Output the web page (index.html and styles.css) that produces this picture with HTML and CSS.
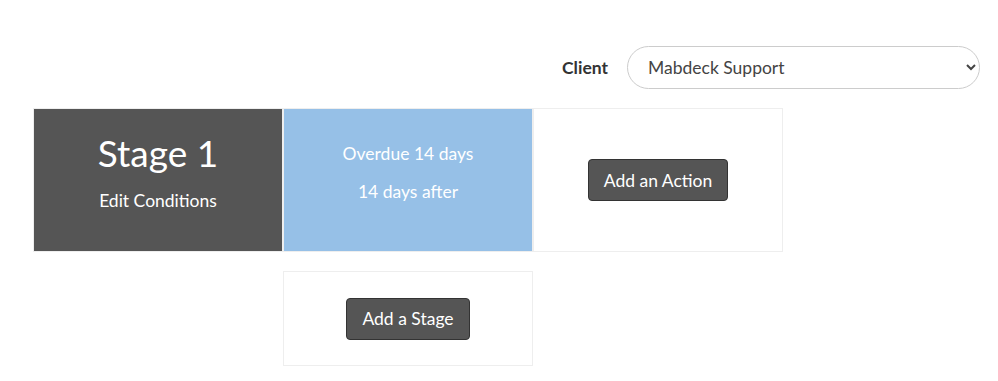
FILE: index.html
```html
<!DOCTYPE HTML>
<html lang=en>
	<head>
		<meta charset=utf-8>
		<title>Stages</title>
		<link rel="stylesheet" href="styles.css">
	</head>
	<body>
		<div class=container>
			<div class=clientRow>
				<label for=clientChooser>Client</label>
				<select id=clientChooser class=clientSelect>
					<option selected>Mabdeck Support</option>
				</select>
			</div>
			<div class=stageGrid>
				<div class="cell stageCell">
					<h2>Stage 1</h2>
					<a href=#>Edit Conditions</a>
				</div>
				<div class="cell conditionCell">
					<p>Overdue 14 days</p>
					<p>14 days after</p>
				</div>
				<div class="cell actionCell">
					<button class=darkButton type=button>Add an Action</button>
				</div>
				<div class="cell addStageCell">
					<button class=darkButton type=button>Add a Stage</button>
				</div>
			</div>
		</div>
	</body>
</html>
```

FILE: styles.css
```css
html, body {
	margin: 0;
	padding: 0;
	background: #fff;
	font-family: Lato, "Open Sans", sans-serif;
	color: #333;
}

.container {
	padding: 46px 18px 0 33px;
}

.clientRow {
	display: flex;
	justify-content: flex-end;
	align-items: center;
	gap: 19px;
}

.clientRow label {
	font-weight: bold;
	font-size: 17.5px;
	color: #333;
}

.clientSelect {
	width: 353px;
	height: 43px;
	padding: 0 16px 0 16px;
	border: 1px solid #ccc;
	border-radius: 22px;
	background: #fff;
	font-family: Lato, sans-serif;
	font-size: 17.5px;
	color: #444;
}

.stageGrid {
	display: grid;
	grid-template-columns: repeat(3, 250px);
	grid-template-rows: 144px 95px;
	row-gap: 19px;
	margin-top: 19px;
}

.cell {
	box-sizing: border-box;
	border: 1px solid #eee;
	display: flex;
	flex-direction: column;
	align-items: center;
	justify-content: center;
	text-align: center;
}

.stageCell {
	background: #555;
	color: #fff;
	padding-bottom: 18px;
}

.stageCell h2 {
	margin: 0 0 15px;
	font-size: 37px;
	font-weight: normal;
	line-height: 1.2;
}

.stageCell a {
	display: block;
	color: #fff;
	text-decoration: none;
	font-size: 17.5px;
	line-height: 21px;
}

.conditionCell {
	background: #96c0e7;
	color: #fff;
	font-size: 17.5px;
}

.conditionCell p {
	margin: 0 0 14px;
	line-height: 24px;
}

.addStageCell {
	grid-column: 2;
}

.darkButton {
	background: #555;
	color: #fff;
	border: 1px solid #333;
	border-radius: 4px;
	padding: 0 15px;
	height: 42px;
	font-family: Lato, sans-serif;
	font-size: 17.5px;
}
```
